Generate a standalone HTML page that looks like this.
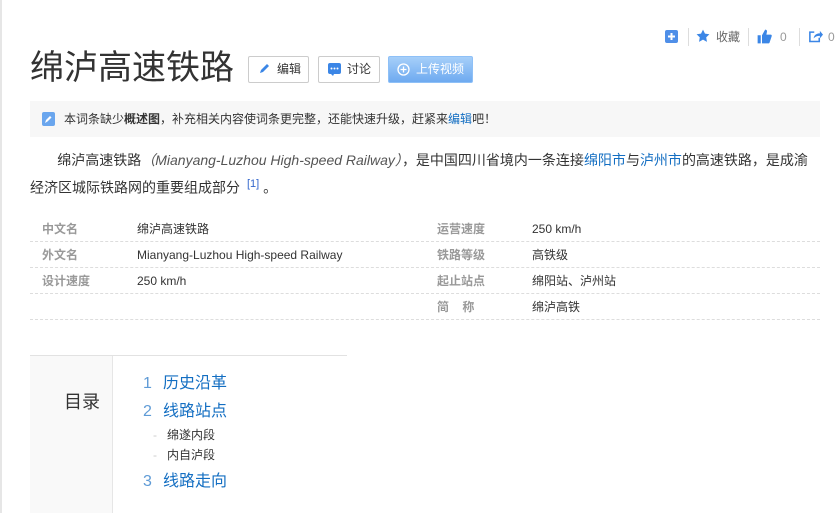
<!DOCTYPE html>
<html><head><meta charset="utf-8">
<style>
*{margin:0;padding:0;box-sizing:border-box}
body{width:836px;height:513px;overflow:hidden;background:#fff;font-family:"Liberation Sans","Noto Sans CJK SC",sans-serif;color:#333;position:relative}
.abs{position:absolute;white-space:nowrap}
.lb{position:absolute;left:0;top:0;width:2px;height:513px;background:#e6e6e6}
.tools{top:28px;height:18px;font-size:12px;color:#666;line-height:18px}
.sep{position:absolute;top:28px;width:1px;height:18px;background:#ddd}
.title{left:30px;top:46px;font-size:34px;color:#333;line-height:44px;letter-spacing:0px}
.btn{position:absolute;top:56px;height:27px;border:1px solid #ccc;border-radius:2px;font-size:12px;color:#333;line-height:25px;background:#fff}
.notice{left:30px;top:101px;width:790px;height:36px;background:#f7f7f7;font-size:12px;line-height:36px;color:#333}
.para{left:30px;top:148px;width:784px;font-size:14px;line-height:24px;color:#333;white-space:normal}
a{color:#136ec2;text-decoration:none}
.row{position:absolute;left:30px;width:790px;height:26px;border-bottom:1px dashed #ddd;font-size:12px;line-height:26px}
.row span{position:absolute;white-space:nowrap}
.k{color:#999;font-weight:bold}
.toc{left:30px;top:355px;width:317px;height:160px;border-top:1px solid #e2e2e2}
.tocl{position:absolute;left:30px;top:356px;width:83px;height:157px;background:#f9f9f9;border-right:1px solid #e6e6e6}
.ti{font-size:16px;color:#136ec2;line-height:20px}
.ti b{font-weight:normal;color:#5f9bd6;display:inline-block;width:20px}
.si{font-size:12px;color:#333;line-height:16px}
.si i{font-style:normal;color:#ccc;display:inline-block;width:14px}
</style></head><body>
<div class="lb"></div>
<svg class="abs" style="left:665px;top:30px" width="13" height="13"><rect width="13" height="13" rx="2" fill="#4f8fe8"/><path d="M6.5 3v7M3 6.5h7" stroke="#fff" stroke-width="2"/></svg>
<div class="sep" style="left:688px"></div>
<svg class="abs" style="left:696px;top:29px" width="14" height="14" viewBox="0 0 24 24"><path d="M12 1l3.4 7 7.6 1-5.5 5.3 1.3 7.7L12 18.3 5.2 22l1.3-7.7L1 9l7.6-1z" fill="#3b86e6"/></svg>
<div class="abs tools" style="left:716px">收藏</div>
<div class="sep" style="left:748px"></div>
<svg class="abs" style="left:757px;top:29px" width="15" height="15" viewBox="0 0 24 24"><rect x="1" y="10" width="5" height="13" fill="#3b86e6"/><path d="M8 10l5-9c2 0 3 1 3 3l-1 5h7c1 0 2 1 1.5 2.5L20 22c-.3.7-1 1-1.7 1H8z" fill="#3b86e6"/></svg>
<div class="abs tools" style="left:780px;color:#999">0</div>
<div class="sep" style="left:799px"></div>
<svg class="abs" style="left:808px;top:29px" width="15" height="15" viewBox="0 0 24 24"><path d="M18 14v6H3V5h7" stroke="#3b86e6" stroke-width="2.5" fill="none"/><path d="M9 15c1-6 5-8 10-8V3l5 6-5 6v-4c-4 0-7 1-10 4z" fill="#3b86e6"/></svg>
<div class="abs tools" style="left:828px;color:#999">0</div>

<div class="abs title">绵泸高速铁路</div>
<div class="btn" style="left:248px;width:61px"><svg class="abs" style="left:9px;top:6px" width="12" height="12" viewBox="0 0 12 12"><path d="M2 10l1-3 6-6 2 2-6 6z" fill="#3b86e6"/></svg><span class="abs" style="left:28px">编辑</span></div>
<div class="btn" style="left:318px;width:62px"><svg class="abs" style="left:9px;top:6px" width="13" height="13" viewBox="0 0 13 13"><rect x="0" y="0" width="13" height="11" rx="2" fill="#3b86e6"/><path d="M3 11l2 2 1-2z" fill="#3b86e6"/><circle cx="3.5" cy="5.5" r="1" fill="#fff"/><circle cx="6.5" cy="5.5" r="1" fill="#fff"/><circle cx="9.5" cy="5.5" r="1" fill="#fff"/></svg><span class="abs" style="left:28px">讨论</span></div>
<div class="btn" style="left:388px;width:85px;border-color:#8ec0f7;background:linear-gradient(#a6cff9,#6eaaf0);color:#fff"><svg class="abs" style="left:8px;top:6px" width="13" height="13" viewBox="0 0 13 13"><circle cx="6.5" cy="6.5" r="5.5" stroke="#fff" stroke-width="1.3" fill="none"/><path d="M6.5 3.5v6M3.5 6.5h6" stroke="#fff" stroke-width="1.3"/></svg><span class="abs" style="left:27px">上传视频</span></div>

<div class="abs notice"><svg class="abs" style="left:12px;top:11px" width="13" height="14" viewBox="0 0 13 14"><rect width="13" height="14" rx="2" fill="#6aa6ee"/><path d="M3 11l1-3 4-4 1.5 1.5-4 4z" fill="#fff"/></svg><span class="abs" style="left:34px">本词条缺少<b>概述图</b>，补充相关内容使词条更完整，还能快速升级，赶紧来<a>编辑</a>吧！</span></div>

<div class="abs para">&nbsp;&nbsp;&nbsp;&nbsp;&nbsp;&nbsp;&nbsp;绵泸高速铁路<i style="color:#555">（Mianyang-Luzhou High-speed Railway）</i>，是中国四川省境内一条连接<a>绵阳市</a>与<a>泸州市</a>的高速铁路，是成渝<br>经济区城际铁路网的重要组成部分 <sup style="color:#3366cc;font-size:11px">&nbsp;[1]</sup>&nbsp;。</div>

<div class="row" style="top:216px"><span class="k" style="left:12px">中文名</span><span style="left:107px">绵泸高速铁路</span><span class="k" style="left:407px">运营速度</span><span style="left:502px">250 km/h</span></div>
<div class="row" style="top:242px"><span class="k" style="left:12px">外文名</span><span style="left:107px">Mianyang-Luzhou High-speed Railway</span><span class="k" style="left:407px">铁路等级</span><span style="left:502px">高铁级</span></div>
<div class="row" style="top:268px"><span class="k" style="left:12px">设计速度</span><span style="left:107px">250 km/h</span><span class="k" style="left:407px">起止站点</span><span style="left:502px">绵阳站、泸州站</span></div>
<div class="row" style="top:294px"><span class="k" style="left:407px">简&nbsp;&nbsp;&nbsp;&nbsp;称</span><span style="left:502px">绵泸高铁</span></div>

<div class="abs toc"></div>
<div class="tocl"></div>
<div class="abs" style="left:64px;top:391px;font-size:18px;color:#333;line-height:22px">目录</div>
<div class="abs ti" style="left:143px;top:374px"><b>1</b>历史沿革</div>
<div class="abs ti" style="left:143px;top:402px"><b>2</b>线路站点</div>
<div class="abs si" style="left:153px;top:427px"><i>-</i>绵遂内段</div>
<div class="abs si" style="left:153px;top:447px"><i>-</i>内自泸段</div>
<div class="abs ti" style="left:143px;top:472px"><b>3</b>线路走向</div>
</body></html>
